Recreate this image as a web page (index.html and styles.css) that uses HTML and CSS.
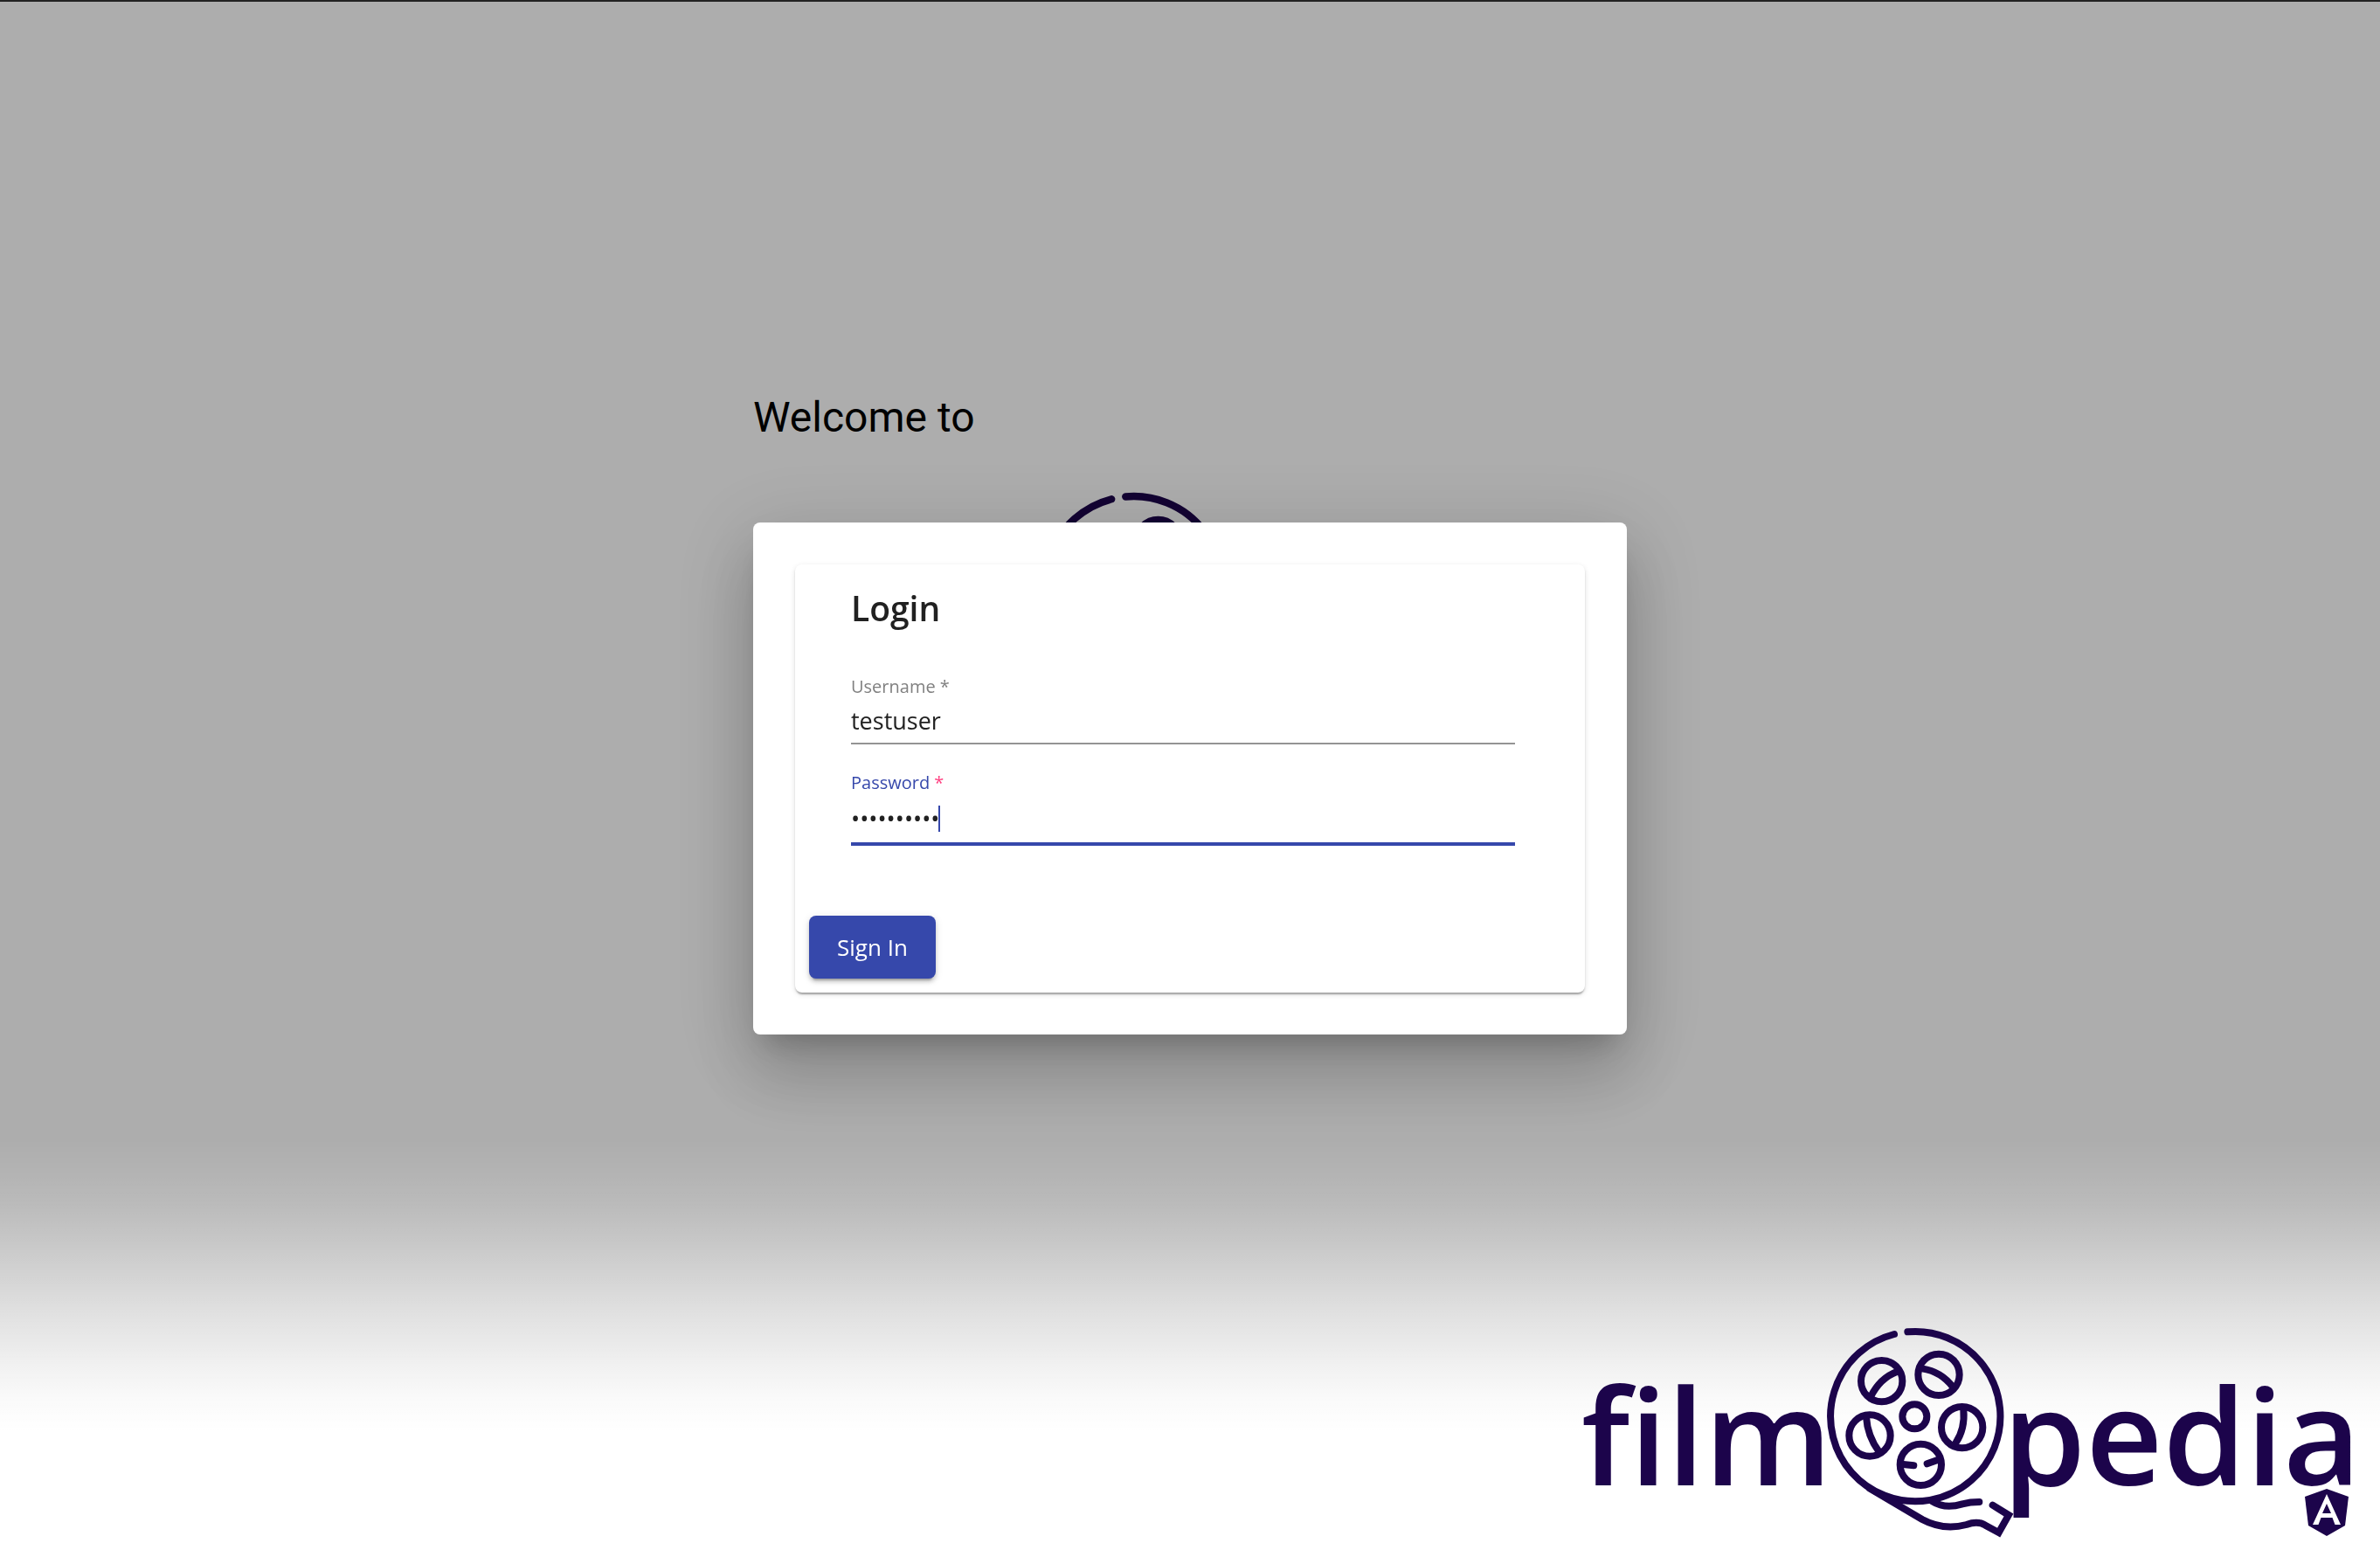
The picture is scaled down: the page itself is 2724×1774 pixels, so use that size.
FILE: index.html
```html
<!DOCTYPE html>
<html lang="en">
<head>
  <meta charset="utf-8">
  <title>Filmopedia</title>
  <link rel="stylesheet" href="styles.css">
</head>
<body>
  <main class="page">
    <div class="hero">
      <h1 class="hero-title">Welcome to</h1>
      <svg class="hero-logo" viewBox="0 0 948 274" aria-hidden="true"><use href="#logo"/></svg>
    </div>
  </main>

  <div class="backdrop">
    <section class="dialog" role="dialog" aria-labelledby="login-title">
      <form class="card">
        <h2 class="card-title" id="login-title">Login</h2>
        <div class="field">
          <label for="username">Username *</label>
          <input id="username" type="text" value="testuser">
        </div>
        <div class="field field-active">
          <label for="password">Password <span class="required">*</span></label>
          <input id="password" type="password" value="secret1234">
          <span class="caret"></span>
        </div>
        <button class="submit" type="button">Sign In</button>
      </form>
    </section>
  </div>

  <footer class="footer">
    <svg class="footer-logo" viewBox="0 0 948 274" role="img" aria-label="filmopedia">
      <g id="logo">
        <g class="logo-type">
          <text x="34" y="200">film</text>
          <text x="516" y="200">pedia</text>
        </g>
        <g class="logo-reel" transform="translate(284 0) scale(.33333)">
          <path d="M370 73A291.500 291.500 0 1 1 324 81"/>
          <circle cx="281" cy="242" r="71"/>
          <circle cx="477" cy="220" r="71"/>
          <circle cx="240" cy="429" r="71"/>
          <circle cx="557" cy="401" r="71"/>
          <circle cx="415" cy="529" r="71"/>
          <circle cx="394" cy="364" r="42"/>
          <path d="M243 296Q275 231 335 209M420 199Q485 209 525 262M228 365Q232 430 272 485M562 340Q568 405 535 455M355 528L391 532M437 526L475 512"/>
          <path d="M240 611L420 717Q492 756 572 735Q611 721 637 737L683 762L717 702L662 668"/>
          <path d="M455 655Q498 682 558 664Q585 657 616 657"/>
        </g>
      </g>
    </svg>
    <svg class="badge" viewBox="0 0 50 54" role="img" aria-label="Angular">
      <path class="badge-shield" d="M25 0L50 9L46 42L25 54L4 42L0 9Z"/>
      <path class="badge-letter" d="M25 6L9 41H15.500L18.500 33H31.500L34.500 41H41ZM25 17L30 28H20Z"/>
    </svg>
  </footer>
</body>
</html>
```
FILE: styles.css
```css
:root {
  --ink: #1c044b;
  --primary: #3648ab;
  --accent: #ff4081;
  --text: #212121;
  --ui-font: "Open Sans", "Noto Sans", sans-serif;
}

* {
  box-sizing: border-box;
}

body {
  margin: 0;
  min-height: 100vh;
  background: #fff;
  font-family: var(--ui-font);
  color: var(--text);
  overflow: hidden;
}

.logo-type {
  fill: var(--ink);
  font-family: var(--ui-font);
  font-size: 153px;
  font-weight: 600;
}

.logo-reel {
  fill: none;
  stroke: var(--ink);
  stroke-width: 24;
  stroke-linecap: round;
}

/* Welcome page */
.page {
  display: flex;
  justify-content: center;
  border-top: 2px solid #333;
  padding: 448px 24px 0;
}

.hero {
  display: flex;
  flex-direction: column;
  gap: 37px;
  width: 100%;
  max-width: 1000px;
}

.hero-title {
  margin: 0;
  font: 400 48px/56px Roboto, sans-serif;
  color: #000;
}

.hero-logo {
  width: 100%;
  max-width: 992px;
}

/* Login dialog */
.backdrop {
  position: fixed;
  inset: 0;
  display: flex;
  align-items: center;
  justify-content: center;
  padding: 8px 24px 0;
  background: rgba(0, 0, 0, .32);
}

.dialog {
  width: 100%;
  max-width: 1000px;
  padding: 48px;
  border-radius: 8px;
  background: #fff;
  box-shadow:
    0 22px 30px -14px rgba(0, 0, 0, .2),
    0 48px 76px 6px rgba(0, 0, 0, .14),
    0 18px 92px 16px rgba(0, 0, 0, .12);
}

.card {
  display: flex;
  flex-direction: column;
  padding: 26px 16px 16px;
  border-radius: 8px;
  box-shadow:
    0 4px 2px -2px rgba(0, 0, 0, .2),
    0 2px 2px rgba(0, 0, 0, .14),
    0 2px 6px rgba(0, 0, 0, .12);
}

.card-title {
  margin: 0 48px 54px;
  font-size: 39px;
  font-weight: 600;
  line-height: 48px;
}

.field {
  position: relative;
  display: flex;
  flex-direction: column;
  margin: 0 64px 32px 48px;
}

.field label {
  font-size: 20px;
  line-height: 24px;
  color: #808080;
}

.field input {
  width: 100%;
  height: 54px;
  padding: 0;
  border: 0;
  border-bottom: 2px solid #949494;
  outline: 0;
  background: none;
  font: 400 27px/32px var(--ui-font);
  color: var(--text);
}

.field-active {
  margin-bottom: 80px;
}

.field-active label {
  color: var(--primary);
}

.field-active .required {
  color: var(--accent);
}

.field-active input {
  height: 60px;
  border-bottom: 4px solid var(--primary);
}

.caret {
  position: absolute;
  left: 100px;
  bottom: 16px;
  width: 2px;
  height: 30px;
  background: var(--primary);
}

.submit {
  align-self: flex-start;
  height: 72px;
  padding: 0 32px;
  border: 0;
  border-radius: 8px;
  background: var(--primary);
  font: 400 26px/32px var(--ui-font);
  color: #fff;
  box-shadow:
    0 6px 2px -4px rgba(0, 0, 0, .2),
    0 4px 4px rgba(0, 0, 0, .14),
    0 2px 10px rgba(0, 0, 0, .12);
}

/* Branding strip that fades in over the bottom of the window */
.footer {
  position: fixed;
  inset: auto 0 0;
  display: flex;
  align-items: flex-end;
  justify-content: flex-end;
  height: 474px;
  background: linear-gradient(
    rgba(255, 255, 255, 0) 0,
    rgba(255, 255, 255, .09) 46px,
    rgba(255, 255, 255, .19) 82px,
    rgba(255, 255, 255, .32) 120px,
    rgba(255, 255, 255, .60) 194px,
    rgba(255, 255, 255, .84) 266px,
    rgba(255, 255, 255, .94) 302px,
    #fff 340px);
}

.footer-logo {
  width: 948px;
}

.badge {
  position: absolute;
  right: 36px;
  bottom: 16px;
  width: 50px;
  height: 54px;
}

.badge-shield {
  fill: var(--ink);
}

.badge-letter {
  fill: #fff;
  fill-rule: evenodd;
}
```
